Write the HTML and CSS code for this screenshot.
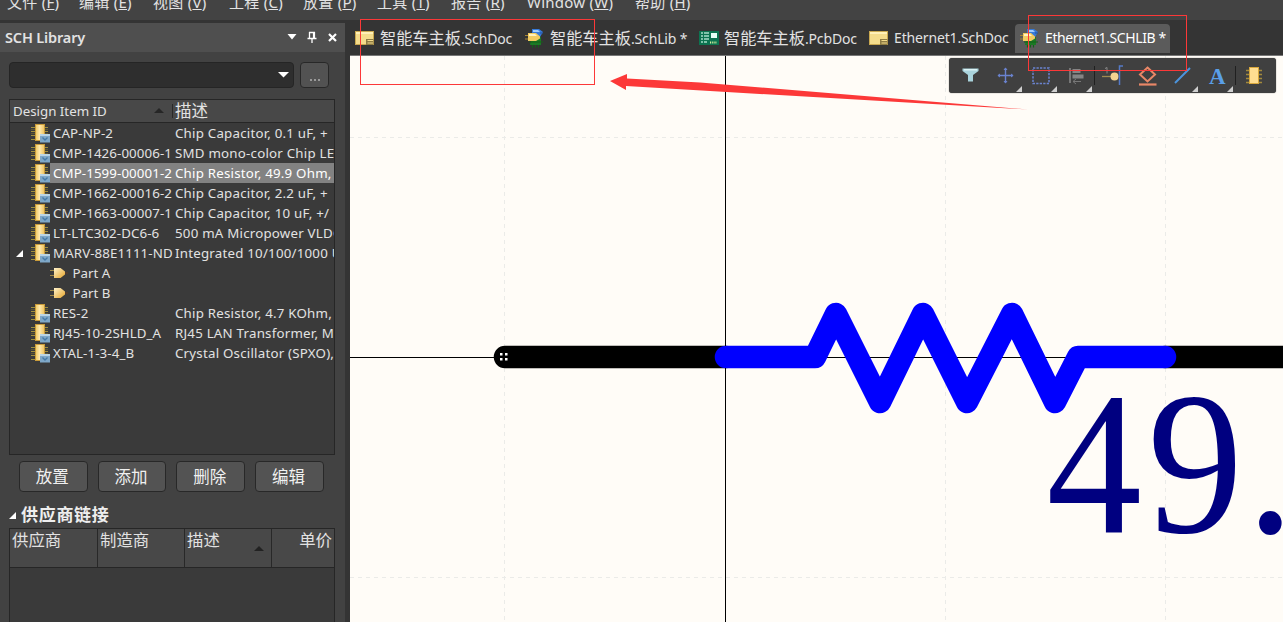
FILE: index.html
```html
<!DOCTYPE html>
<html lang="zh">
<head>
<meta charset="utf-8">
<title>SCH Library</title>
<link rel="stylesheet" href="styles.css">
</head>
<body>
<svg class="defs" width="0" height="0">
  <defs>
    <linearGradient id="gold" x1="0" x2="1" y1="0" y2="0"><stop offset="0" stop-color="#f0c95f"/><stop offset=".45" stop-color="#ffe9ae"/><stop offset="1" stop-color="#eec25c"/></linearGradient>
    <linearGradient id="gate" x1="0" x2="1" y1="0" y2="1"><stop offset="0" stop-color="#fff3cc"/><stop offset="1" stop-color="#e5a52c"/></linearGradient>
    <symbol id="chip" viewBox="0 0 20 20">
      <path d="M1 4.500h17M1 8.500h17M1 12.500h17M1 16.500h17" stroke="#a1903d" stroke-width="1"/>
      <path d="M1 6.500h17M1 10.500h17" stroke="#5e5731" stroke-width="1"/>
      <rect x="5.500" y="1.500" width="9" height="16" fill="url(#gold)" stroke="#c99b3a"/>
      <rect x="10" y="11" width="10" height="8.500" fill="#7fa8c8"/>
      <path d="M10 11h10v2H10z" fill="#b9d4e6"/>
      <path d="M12.500 14.500l2.500 2.500 2.500-2.500" fill="none" stroke="#467aa6" stroke-width="1.300"/>
    </symbol>
    <symbol id="part" viewBox="0 0 20 12">
      <path d="M0 3.500h5M0 8.500h5" stroke="#a08847"/><path d="M14 6h4" stroke="#633a25"/>
      <path d="M4 1h6.500l4.500 3.500v3L10.500 11H4z" fill="url(#gate)"/>
    </symbol>
    <symbol id="doc" viewBox="0 0 20 16">
      <rect x=".5" y="1.500" width="18" height="13" fill="#f4dc8c" stroke="#c9a850"/>
      <path d="M1 2h17v2H1z" fill="#fff0b8"/>
      <path d="M11 9h7.500v6H11z" fill="#8e7b43"/><path d="M12.500 10.500h5.500M12.500 13h5.500" stroke="#f4dc8c" stroke-width="1.200"/>
    </symbol>
    <symbol id="lib" viewBox="0 0 20 20">
      <path d="M7 1h7l4 3-3 5H7z" fill="#377ad8"/><path d="M8 2h5l2 2H8z" fill="#9ccaff"/><path d="M15 5h3" stroke="#244e9a"/>
      <path d="M6 12l10-3v8H5z" fill="#1b7a24"/><path d="M7.500 17v2.500M10.500 17v2.500M13.500 17v2.500M4 14h14" stroke="#146019" stroke-width="1.200"/>
      <path d="M0 7.500h4M0 11h4" stroke="#a78534"/>
      <path d="M3 5h8l4 3.500v2L11 13H3z" fill="#f2cb60"/><path d="M4 6h6l2 2H4z" fill="#fff1be"/>
    </symbol>
    <symbol id="pcb" viewBox="0 0 20 16">
      <rect x="0" y="1" width="20" height="14" fill="#0c7350"/>
      <path d="M2 3h2M2 6h2M2 9h2M2 12h2M5 3h5M5 6h5M5 9h5M5 12h3" stroke="#a5ddc8" stroke-width="1.300"/>
      <rect x="12" y="3" width="6" height="5" fill="#e6fff6"/><path d="M11 12.500h7" stroke="#d7ef9d" stroke-width="2" stroke-dasharray="1.200 1"/>
    </symbol>
    <symbol id="more" viewBox="0 0 6 6"><path d="M6 0v6H0z" fill="#d0d0d0"/></symbol>
  </defs>
</svg>
<div class="app">
  <nav class="menu">
    <span class="m1">文件 (<u>F</u>)</span><span class="m2">编辑 (<u>E</u>)</span><span class="m3">视图 (<u>V</u>)</span><span class="m4">工程 (<u>C</u>)</span><span class="m4">放置 (<u>P</u>)</span><span class="m4">工具 (<u>T</u>)</span><span class="m5">报告 (<u>R</u>)</span><span class="m6">Window (<u>W</u>)</span><span>帮助 (<u>H</u>)</span>
  </nav>
  <div class="main">
    <aside class="panel">
      <header class="panel-title"><b>SCH Library</b>
        <svg width="54" height="16" viewBox="0 0 54 16"><path d="M1.500 5h9l-4.500 5.500z" fill="#fff"/><path d="M23.500 3v6M23 3.500h6M21.500 9.500h9M26 10v4" stroke="#fff" stroke-width="1.300" fill="none"/><path d="M28 3v6" stroke="#fff" stroke-width="2.200"/><path d="M43 5l7 7M50 5l-7 7" stroke="#fff" stroke-width="2.200"/></svg>
      </header>
      <div class="search">
        <div class="combo"><svg width="11" height="6" viewBox="0 0 11 6"><path d="M0 0h11L5.500 5.500z" fill="#fff"/></svg></div>
        <div class="dots"><i></i><i></i><i></i></div>
      </div>
      <section class="grid">
        <div class="grid-head"><span class="hid">Design Item ID</span><svg width="10" height="6" viewBox="0 0 10 6"><path d="M0 5l5-5 5 5z" fill="#262626"/></svg><span class="hdesc">描述</span></div>
        <div class="row"><svg class="chip"><use href="#chip"/></svg><span class="id">CAP-NP-2</span><span class="desc">Chip Capacitor, 0.1 uF, +</span></div>
        <div class="row"><svg class="chip"><use href="#chip"/></svg><span class="id">CMP-1426-00006-1</span><span class="desc">SMD mono-color Chip LE</span></div>
        <div class="row sel"><svg class="chip"><use href="#chip"/></svg><span class="id">CMP-1599-00001-2</span><span class="desc">Chip Resistor, 49.9 Ohm,</span></div>
        <div class="row"><svg class="chip"><use href="#chip"/></svg><span class="id">CMP-1662-00016-2</span><span class="desc">Chip Capacitor, 2.2 uF, +</span></div>
        <div class="row"><svg class="chip"><use href="#chip"/></svg><span class="id">CMP-1663-00007-1</span><span class="desc">Chip Capacitor, 10 uF, +/</span></div>
        <div class="row"><svg class="chip"><use href="#chip"/></svg><span class="id">LT-LTC302-DC6-6</span><span class="desc">500 mA Micropower VLDO</span></div>
        <div class="row open"><svg class="chip"><use href="#chip"/></svg><span class="id">MARV-88E1111-ND</span><span class="desc">Integrated 10/100/1000 U</span></div>
        <div class="row"><svg class="part"><use href="#part"/></svg><span>Part A</span></div>
        <div class="row"><svg class="part"><use href="#part"/></svg><span>Part B</span></div>
        <div class="row"><svg class="chip"><use href="#chip"/></svg><span class="id">RES-2</span><span class="desc">Chip Resistor, 4.7 KOhm,</span></div>
        <div class="row"><svg class="chip"><use href="#chip"/></svg><span class="id">RJ45-10-2SHLD_A</span><span class="desc">RJ45 LAN Transformer, M</span></div>
        <div class="row"><svg class="chip"><use href="#chip"/></svg><span class="id">XTAL-1-3-4_B</span><span class="desc">Crystal Oscillator (SPXO),</span></div>
      </section>
      <div class="buttons"><button>放置</button><button>添加</button><button>删除</button><button>编辑</button></div>
      <h2 class="sub"><svg width="7" height="7" viewBox="0 0 7 7"><path d="M7 0v7H0z" fill="#fff"/></svg>供应商链接</h2>
      <section class="suppliers">
        <div class="sup-head"><span>供应商</span><span>制造商</span><span>描述<svg width="10" height="6" viewBox="0 0 10 6"><path d="M0 5l5-5 5 5z" fill="#222"/></svg></span><span>单价</span></div>
      </section>
    </aside>
    <main class="editor">
      <div class="tabs">
        <div class="tab t1"><svg class="doc"><use href="#doc"/></svg><span>智能车主板<em>.SchDoc</em></span></div>
        <div class="tab t2"><svg class="lib"><use href="#lib"/></svg><span>智能车主板<em>.SchLib *</em></span></div>
        <div class="tab t3"><svg class="pcb"><use href="#pcb"/></svg><span>智能车主板<em>.PcbDoc</em></span></div>
        <div class="tab t4"><svg class="doc"><use href="#doc"/></svg><span><em>Ethernet1.SchDoc</em></span></div>
        <div class="tab t5"><svg class="lib"><use href="#lib"/></svg><span><em>Ethernet1.SCHLIB *</em></span></div>
      </div>
      <div class="canvas">
        <svg class="sheet" width="933" height="566" viewBox="350 56 933 566">
          <path d="M504.500 56V622M945.500 56V622M1165.500 56V622M350 137.500H1283M350 577.500H1283" stroke="#ebebe8" stroke-dasharray="4 4" fill="none"/>
          <path d="M350 357.500H1283" stroke="#000"/>
          <path d="M505 357H726M1165 357H1300" stroke="#000" stroke-width="22.500" stroke-linecap="round"/>
          <path d="M726 357H815L836 314L880 402L923 314L967 402L1012 314L1055 402L1078 357H1165" fill="none" stroke="#00f" stroke-width="22.500" stroke-linecap="round" stroke-linejoin="round"/>
          <path d="M725.500 56V346M725.500 368V622" stroke="#000"/>
          <path d="M500 353h2.500v2.500H500zM505 353h2.500v2.500H505zM500 358h2.500v2.500H500zM505 358h2.500v2.500H505z" fill="#fff"/>
          <text class="value" transform="translate(1046.500 532) scale(.935 1)" x="0 108 214" y="0">49.</text>
        </svg>
        <div class="toolbar">
          <svg width="327" height="35" viewBox="949 58 327 35">
            <path d="M962.500 68.500h16v2.500l-5.500 4v6.500h-5v-6.500l-5.500-4z" fill="#a9d3dc"/><path d="M964 69h13v1.500h-13z" fill="#dcf3f6"/>
            <path d="M998 75.500h15M1005.500 68v15" stroke="#6a83cf" stroke-width="1.400"/><path d="M1003.500 70l2-2.500 2 2.500zM1003.500 81l2 2.500 2-2.500zM1000 73.500l-2.500 2 2.500 2zM1011 73.500l2.500 2-2.500 2z" fill="#6a83cf"/>
            <rect x="1033" y="68" width="16" height="15.500" fill="none" stroke="#6a83cf" stroke-width="1.500" stroke-dasharray="2.300 1.200"/>
            <path d="M1070 68v15" stroke="#777" stroke-width="2"/><path d="M1072.500 69h8v4h-8zM1072.500 74.500h11v4h-11z" fill="#858585"/><path d="M1073 81.500h8M1076 79l-3 2.500 3 2.500" stroke="#777" fill="none"/>
            <path d="M1094.500 66v19M1235.500 66v19" stroke="#202020"/>
            <path d="M1102 76.500h13" stroke="#a08a50" stroke-width="1.300"/><path d="M1105 68.500l2-1v6" stroke="#888" fill="none"/><circle cx="1114.500" cy="76.500" r="4" fill="#f5d590"/><path d="M1123 66h-3.500v19" stroke="#557ac6" stroke-width="1.500" fill="none"/>
            <path d="M1147.500 67.500l7.500 7-7.500 7-7.500-7z" fill="none" stroke="#e98767" stroke-width="2"/><path d="M1139 84.500h17.500" stroke="#e98767" stroke-width="2.200"/>
            <path d="M1175 83l15-15" stroke="#4b94dd" stroke-width="2"/>
            <text class="tool-a" x="1209" y="84">A</text>
            <path d="M1246 70.500h16M1246 74.500h16M1246 78.500h16M1246 82.500h16" stroke="#a48a3c" stroke-width="1.400"/><rect x="1249.500" y="67.500" width="9" height="16" fill="#ffdd91" stroke="#d9a83d"/>
            <use href="#more" x="1016" y="86" width="6" height="6"/><use href="#more" x="1051" y="86" width="6" height="6"/><use href="#more" x="1086" y="86" width="6" height="6"/><use href="#more" x="1192" y="86" width="6" height="6"/><use href="#more" x="1227" y="86" width="6" height="6"/>
          </svg>
        </div>
      </div>
    </main>
  </div>
  <svg class="notes" width="1283" height="622" viewBox="0 0 1283 622">
    <rect x="360.500" y="19.500" width="234" height="65" fill="none" stroke="#fc3838"/>
    <rect x="1028.500" y="15.500" width="158" height="55" fill="none" stroke="#fc3838"/>
    <path d="M610 81L627 74V78.500L700 82.500L1028 109.500L710 91L626 86V90z" fill="#fc3838"/>
  </svg>
</div>
</body>
</html>
```
FILE: styles.css
```css
* { box-sizing: border-box; }
body { margin: 0; background: #404040; color: #e2e2e2; font-family: "Noto Sans", "Noto Sans CJK SC", sans-serif; font-size: 13.3px; overflow: hidden; }
.defs { display: block; height: 0; }
.app { position: relative; width: 1283px; height: 622px; display: flex; flex-direction: column; overflow: hidden; }
.menu { height: 20px; flex: none; display: flex; padding-left: 7px; background: #434343; font-size: 15px; line-height: 20px; overflow: hidden; white-space: pre; }
.menu span { margin-top: -8px; flex: none; letter-spacing: .25px; }
.menu u { text-underline-offset: 1px; }
.m1 { width: 72px; } .m2, .m4 { width: 74px; } .m3 { width: 76px; } .m5 { width: 76px; } .m6 { width: 108px; }
.main { flex: 1; display: flex; background: #343434; min-height: 0; }
.panel { width: 345px; margin-top: 3px; background: #424242; display: flex; flex-direction: column; }
.panel-title { height: 29px; flex: none; background: #4f4f4f; display: flex; align-items: center; justify-content: space-between; padding: 0 5px; font-size: 14.5px; }
.panel-title b { font-weight: 600; letter-spacing: -.15px; margin-top: -2px; }
.panel-title svg { margin-top: -1px; }
.search { display: flex; gap: 6px; padding: 10px 0 0 9px; height: 47px; flex: none; }
.combo { width: 285px; height: 26px; border: 1px solid #252525; border-radius: 4px; background: #2e2e2e; display: flex; align-items: center; justify-content: flex-end; padding-right: 4px; }
.dots { width: 29px; height: 26px; border: 1px solid #282828; border-radius: 4px; background: #525252; display: flex; gap: 2px; align-items: flex-end; justify-content: center; padding-bottom: 6px; }
.dots i { width: 2px; height: 2px; background: #999; }
.grid { width: 326px; height: 356px; flex: none; margin-left: 9px; border: 1px solid #262626; background: #3a3a3a; overflow: hidden; }
.grid-head { height: 23px; display: flex; align-items: center; background: #484848; border-bottom: 1px solid #262626; padding-left: 3px; }
.hid { width: 141px; }
.hdesc { margin-left: 8px; padding-left: 2px; border-left: 1px solid #292929; font-size: 16.5px; line-height: 14px; }
.row { height: 20px; display: flex; align-items: center; white-space: nowrap; padding-left: 20px; line-height: 20px; }
.chip { width: 20px; height: 20px; flex: none; }
.id { width: 125px; padding-left: 3px; flex: none; height: 20px; letter-spacing: .1px; }
.desc { flex: 1; min-width: 0; height: 20px; overflow: hidden; letter-spacing: .22px; }
.sel .id, .sel .desc { background: #828282; color: #fff; }
.open { position: relative; }
.open::before { content: ""; position: absolute; left: 6px; top: 7px; border-left: 7px solid transparent; border-bottom: 7px solid #fff; }
.part { width: 20px; height: 12px; margin: -1px 2.5px 0 20px; }
.buttons { display: flex; gap: 10px; padding: 6px 0 0 19px; height: 37px; flex: none; }
button { width: 68.7px; height: 31px; flex: none; border: 1px solid #282828; border-radius: 4px; background: #535353; color: #f0f0f0; padding: 0 2px 2px 0; font: 16.5px "Noto Sans CJK SC", sans-serif; }
.sub { margin: 10px 0 0 9px; height: 26px; flex: none; display: flex; align-items: center; gap: 5px; font-size: 17px; font-weight: 700; line-height: 24px; color: #eee; letter-spacing: .7px; }
.sub svg { margin-top: 1px; }
.suppliers { flex: 1; width: 326px; margin-left: 9px; border: 1px solid #262626; border-bottom: 0; background: #3a3a3a; }
.sup-head { height: 39px; display: flex; background: #484848; border-bottom: 1px solid #262626; font-size: 16.400px; line-height: 21px; }
.sup-head span { width: 87px; padding-left: 2px; display: flex; gap: 34px; }
.sup-head span + span { border-left: 1px solid #282828; }
.sup-head span:last-child { width: 63px; justify-content: flex-end; padding-right: 2px; }
.sup-head svg { margin-top: 17px; }
.editor { width: 933px; margin-left: 5px; display: flex; flex-direction: column; }
.tabs { height: 36px; flex: none; display: flex; padding: 4px 0 2px 5px; border-bottom: 1px solid #777; background: #343434; }
.tab { display: flex; align-items: center; height: 29px; gap: 5px; white-space: nowrap; font-size: 16.200px; flex: none; }
.tab span { margin-top: -4px; }
.tab svg { margin-top: -2px; flex: none; }
.tab em { font-style: normal; font-size: 14px; letter-spacing: -.15px; }
.t1 { width: 170px; } .t2 { width: 174px; } .t3 { width: 170px; } .t4 { width: 146px; }
.t5 { width: 155px; padding-left: 5px; background: #5b5b5b; border-radius: 4px 4px 0 0; color: #fff; }
.t5 em { letter-spacing: -.4px; }
.doc, .pcb { width: 20px; height: 16px; } .lib { width: 20px; height: 20px; }
.canvas { flex: 1; position: relative; background: #fffcf7; }
.sheet { display: block; }
.value { font: 204px "Liberation Serif", serif; fill: #000080; }
.toolbar { position: absolute; left: 599px; top: 2px; width: 327px; height: 35px; border-radius: 3px; background: #404040; box-shadow: 0 0 1px #333; }
.toolbar svg { display: block; }
.tool-a { font: bold 23px "Liberation Serif", serif; fill: #5a9fe8; }
.notes { position: absolute; inset: 0; }
```
